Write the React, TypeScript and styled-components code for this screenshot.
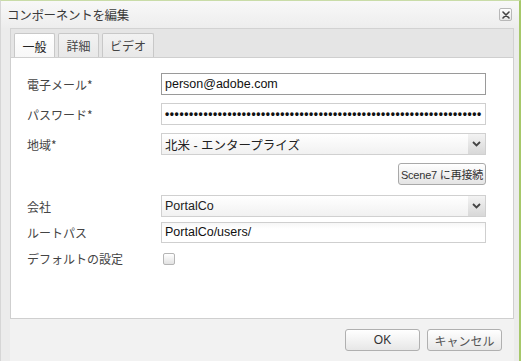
import React from "react";
import styled, { createGlobalStyle } from "styled-components";

const GlobalStyle = createGlobalStyle`
    html, body {
        margin: 0;
        padding: 0;
        background: #ffffff;
    }
    body {
        font-family: "Liberation Sans", "Noto Sans CJK JP", sans-serif;
        font-size: 12px;
        color: #333;
    }
`;

const fieldRows = [
    { label: "電子メール*", value: "person@adobe.com", kind: "input", dark: true },
    { label: "パスワード*", value: "", kind: "password" },
    { label: "地域*", value: "北米 - エンタープライズ", kind: "select" },
];

const companyRows = [
    { label: "会社", value: "PortalCo", kind: "select" },
    { label: "ルートパス", value: "PortalCo/users/", kind: "input" },
];

const App = () => {
    return (
        <>
            <GlobalStyle />
            <Dialog>
                <TitleBar>
                    <Title>コンポーネントを編集</Title>
                    <CloseButton aria-label="close">
                        <svg width="10" height="10" viewBox="0 0 10 10">
                            <path
                                d="M2 2 L8 8 M8 2 L2 8"
                                stroke="#444"
                                strokeWidth="1.6"
                                strokeLinecap="round"
                            />
                        </svg>
                    </CloseButton>
                </TitleBar>

                <Body>
                    <TabStrip>
                        <Tab active>一般</Tab>
                        <Tab>詳細</Tab>
                        <Tab wide>ビデオ</Tab>
                    </TabStrip>

                    <Panel>
                        {fieldRows.map((row) => (
                            <Row key={row.label}>
                                <Label>{row.label}</Label>
                                {row.kind === "select" ? (
                                    <Select>
                                        <SelectText>{row.value}</SelectText>
                                        <Arrow>
                                            <Chevron />
                                        </Arrow>
                                    </Select>
                                ) : row.kind === "password" ? (
                                    <Field>
                                        <Dots>{"•".repeat(66)}</Dots>
                                    </Field>
                                ) : (
                                    <Field dark={row.dark}>{row.value}</Field>
                                )}
                            </Row>
                        ))}

                        <ButtonRow>
                            <SmallButton>Scene7 に再接続</SmallButton>
                        </ButtonRow>

                        {companyRows.map((row) => (
                            <Row key={row.label} tight>
                                <Label>{row.label}</Label>
                                {row.kind === "select" ? (
                                    <Select wide>
                                        <SelectText>{row.value}</SelectText>
                                        <Arrow>
                                            <Chevron />
                                        </Arrow>
                                    </Select>
                                ) : (
                                    <Field wide light>
                                        {row.value}
                                    </Field>
                                )}
                            </Row>
                        ))}

                        <Row tight>
                            <Label>デフォルトの設定</Label>
                            <Check />
                        </Row>
                    </Panel>
                </Body>

                <Footer>
                    <FooterButton>OK</FooterButton>
                    <FooterButton muted>キャンセル</FooterButton>
                </Footer>
            </Dialog>
        </>
    );
};

const Chevron = () => (
    <svg width="9" height="6" viewBox="0 0 9 6">
        <path
            d="M1 1 L4.5 4.5 L8 1"
            fill="none"
            stroke="#444"
            strokeWidth="1.8"
        />
    </svg>
);

export default App;

const Dialog = styled.div`
    width: 521px;
    height: 361px;
    box-sizing: border-box;
    display: flex;
    flex-direction: column;
    background: #ececec;
    border-left: 1px solid #d6d6d6;
    border-right: 2px solid #a6c86a;
    border-top: 1px solid #c9dca8;
    overflow: hidden;
`;

const TitleBar = styled.div`
    height: 27px;
    display: flex;
    align-items: center;
    justify-content: space-between;
    padding: 0 7px 0 6px;
    background: linear-gradient(#f8f8f8, #ededed);
`;

const Title = styled.div`
    font-family: "Noto Sans CJK JP", sans-serif;
    font-size: 12.5px;
    color: #3a3a3a;
    letter-spacing: -0.3px;
`;

const CloseButton = styled.div`
    width: 11px;
    height: 11px;
    border: 1px solid #b8b8b8;
    border-radius: 2px;
    background: linear-gradient(#ffffff, #e6e6e6);
    display: flex;
    align-items: center;
    justify-content: center;
`;

const Body = styled.div`
    flex: 1;
    display: flex;
    flex-direction: column;
    padding: 0 5px 0 9px;
`;

const TabStrip = styled.div`
    height: 29px;
    box-sizing: border-box;
    display: flex;
    align-items: flex-end;
    gap: 3px;
    padding-left: 3px;
    background: #e5e5e5;
    border: 1px solid #d2d2d2;
    border-bottom: none;
`;

const Tab = styled.div<{ active?: boolean; wide?: boolean }>`
    width: ${({ wide }) => (wide ? "52px" : "41px")};
    height: ${({ active }) => (active ? "25px" : "24px")};
    box-sizing: border-box;
    display: flex;
    align-items: center;
    justify-content: center;
    font-family: "Noto Sans CJK JP", sans-serif;
    font-size: 12px;
    color: ${({ active }) => (active ? "#222" : "#444")};
    background: ${({ active }) =>
        active ? "linear-gradient(#ffffff, #f7f7f7)" : "linear-gradient(#f2f2f2, #e8e8e8)"};
    border: 1px solid #c8c8c8;
    border-bottom: none;
    border-radius: 2px 2px 0 0;
    margin-bottom: ${({ active }) => (active ? "-1px" : "0")};
`;

const Panel = styled.div`
    height: 262px;
    box-sizing: border-box;
    background: #ffffff;
    border: 1px solid #cfcfcf;
    padding: 15px 27px 0 16px;
    display: flex;
    flex-direction: column;
`;

const Row = styled.div<{ tight?: boolean }>`
    display: flex;
    align-items: center;
    min-height: 22px;
    margin-bottom: ${({ tight }) => (tight ? "4px" : "8px")};
`;

const Label = styled.div`
    width: 134px;
    flex-shrink: 0;
    font-family: "Noto Sans CJK JP", sans-serif;
    font-size: 12px;
    color: #444;
`;

const Field = styled.div<{ dark?: boolean; wide?: boolean; light?: boolean }>`
    width: ${({ wide }) => (wide ? "327px" : "325px")};
    height: ${({ light }) => (light ? "21px" : "22px")};
    box-sizing: border-box;
    display: flex;
    align-items: center;
    padding: 0 3px;
    font-family: "Liberation Sans", "Noto Sans CJK JP", sans-serif;
    font-size: 12.5px;
    color: #111;
    background: ${({ light }) =>
        light ? "linear-gradient(#f6f6f6, #ffffff 6px)" : "#ffffff"};
    border: 1px solid ${({ dark }) => (dark ? "#9a9a9a" : "#cfcfcf")};
    overflow: hidden;
    white-space: nowrap;
`;

const Dots = styled.span`
    font-family: "Liberation Sans", sans-serif;
    font-size: 12px;
    font-weight: bold;
    letter-spacing: 0.6px;
    color: #111;
`;

const Select = styled.div<{ wide?: boolean }>`
    width: ${({ wide }) => (wide ? "327px" : "325px")};
    height: 22px;
    box-sizing: border-box;
    display: flex;
    align-items: stretch;
    background: linear-gradient(#ffffff, #f1f1f1);
    border: 1px solid #d0d0d0;
`;

const SelectText = styled.div`
    flex: 1;
    display: flex;
    align-items: center;
    padding: 0 3px;
    font-family: "Liberation Sans", "Noto Sans CJK JP", sans-serif;
    font-size: 12.5px;
    color: #222;
`;

const Arrow = styled.div`
    width: 17px;
    display: flex;
    align-items: center;
    justify-content: center;
    background: linear-gradient(#f3f3f3, #d8d8d8);
`;

const ButtonRow = styled.div`
    display: flex;
    justify-content: flex-end;
    margin-bottom: 10px;
`;

const SmallButton = styled.div`
    width: 88px;
    height: 22px;
    box-sizing: border-box;
    display: flex;
    align-items: center;
    justify-content: center;
    border: 1px solid #a9a9a9;
    border-radius: 3px;
    background: linear-gradient(#ffffff, #e4e4e4);
    font-family: "Liberation Sans", "Noto Sans CJK JP", sans-serif;
    font-size: 11px;
    color: #333;
    white-space: nowrap;
    letter-spacing: -0.2px;
`;

const Check = styled.div`
    width: 10px;
    height: 10px;
    margin-left: 2px;
    margin-top: 1px;
    border: 1px solid #b5b5b5;
    border-radius: 2px;
    background: linear-gradient(#ffffff, #e2e2e2);
`;

const Footer = styled.div`
    flex: 1;
    display: flex;
    justify-content: flex-end;
    align-items: center;
    gap: 7px;
    padding: 0 12px 0 0;
    margin-left: 9px;
    margin-right: 5px;
    background: #f2f2f2;
`;

const FooterButton = styled.div<{ muted?: boolean }>`
    width: 75px;
    height: 22px;
    box-sizing: border-box;
    display: flex;
    align-items: center;
    justify-content: center;
    border: 1px solid #b0b0b0;
    border-radius: 3px;
    background: linear-gradient(#ffffff, #e7e7e7);
    font-family: "Liberation Sans", "Noto Sans CJK JP", sans-serif;
    font-size: 12px;
    color: ${({ muted }) => (muted ? "#555" : "#333")};
`;
